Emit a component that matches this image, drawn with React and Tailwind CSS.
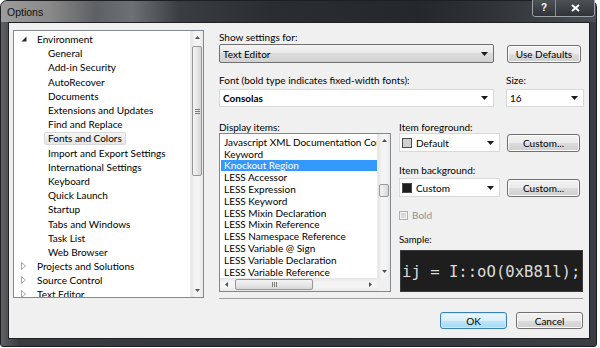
import React from "react";

const treeItems = [
  { t: "Environment", lvl: 0, exp: true },
  { t: "General", lvl: 1 },
  { t: "Add-in Security", lvl: 1 },
  { t: "AutoRecover", lvl: 1 },
  { t: "Documents", lvl: 1 },
  { t: "Extensions and Updates", lvl: 1 },
  { t: "Find and Replace", lvl: 1 },
  { t: "Fonts and Colors", lvl: 1, sel: true },
  { t: "Import and Export Settings", lvl: 1 },
  { t: "International Settings", lvl: 1 },
  { t: "Keyboard", lvl: 1 },
  { t: "Quick Launch", lvl: 1 },
  { t: "Startup", lvl: 1 },
  { t: "Tabs and Windows", lvl: 1 },
  { t: "Task List", lvl: 1 },
  { t: "Web Browser", lvl: 1 },
  { t: "Projects and Solutions", lvl: 0 },
  { t: "Source Control", lvl: 0 },
  { t: "Text Editor", lvl: 0 },
];

const listItems = [
  "Javascript XML Documentation Comment",
  "Keyword",
  "Knockout Region",
  "LESS Accessor",
  "LESS Expression",
  "LESS Keyword",
  "LESS Mixin Declaration",
  "LESS Mixin Reference",
  "LESS Namespace Reference",
  "LESS Variable @ Sign",
  "LESS Variable Declaration",
  "LESS Variable Reference",
  "LESS Variable Value",
];

function Arrow({ dir = "down", size = "sm", color = "#1a1a1a" }) {
  const big = size === "big";
  const w = big ? 7 : 5;
  const h = big ? 4 : 3;
  if (dir === "down")
    return (
      <svg width={w} height={h} viewBox={`0 0 ${w} ${h}`}>
        <path d={`M0 0H${w}L${w / 2} ${h}Z`} fill={color} />
      </svg>
    );
  if (dir === "up")
    return (
      <svg width={w} height={h} viewBox={`0 0 ${w} ${h}`}>
        <path d={`M0 ${h}H${w}L${w / 2} 0Z`} fill={color} />
      </svg>
    );
  if (dir === "left")
    return (
      <svg width={h} height={w} viewBox={`0 0 ${h} ${w}`}>
        <path d={`M${h} 0V${w}L0 ${w / 2}Z`} fill={color} />
      </svg>
    );
  return (
    <svg width={h} height={w} viewBox={`0 0 ${h} ${w}`}>
      <path d={`M0 0V${w}L${h} ${w / 2}Z`} fill={color} />
    </svg>
  );
}

function Button({ children, primary }) {
  return (
    <div
      className={
        primary
          ? "w-[67px] h-[17px] rounded-[3px] border border-[#3c7fb1] bg-[linear-gradient(#eaf6fd,#d9f0fc_50%,#bee6fd_50%,#a7d9f5)] shadow-[inset_0_0_0_1px_#c7ebfc] flex items-center justify-center text-[10px]"
          : "w-[67px] h-[17px] rounded-[3px] border border-[#707070] bg-[linear-gradient(#f2f2f2,#ebebeb_50%,#dddddd_50%,#cfcfcf)] shadow-[inset_0_0_0_1px_#fbfbfb] flex items-center justify-center text-[10px]"
      }
    >
      {children}
    </div>
  );
}

function SmallButton({ children, w }) {
  return (
    <div
      className={`${w} h-[18px] rounded-[3px] border border-[#707070] bg-[linear-gradient(#f2f2f2,#ebebeb_50%,#dddddd_50%,#cfcfcf)] shadow-[inset_0_0_0_1px_#fbfbfb] flex items-center justify-center text-[10px]`}
    >
      {children}
    </div>
  );
}

function VScroll({ thumbTop, thumbH, grip }) {
  return (
    <div className="w-[13px] h-full bg-[linear-gradient(90deg,#e4e4e4,#f4f4f4_30%,#f4f4f4_70%,#e8e8e8)] border-l border-[#ececec] flex flex-col items-center">
      <div className="h-[13px] flex items-center justify-center">
        <Arrow dir="up" color="#505050" />
      </div>
      <div className="flex-1 w-full relative">
        <div
          className="absolute left-[1px] right-[1px] rounded-[2px] border border-[#979797] bg-[linear-gradient(90deg,#f3f3f3,#e8e8e8_50%,#d6d6d6)] flex flex-col items-center justify-center gap-[1px]"
          style={{ top: thumbTop, height: thumbH }}
        >
          {grip && (
            <>
              <div className="w-[5px] h-px bg-[#7a7a7a]" />
              <div className="w-[5px] h-px bg-[#7a7a7a]" />
              <div className="w-[5px] h-px bg-[#7a7a7a]" />
            </>
          )}
        </div>
      </div>
      <div className="h-[13px] flex items-center justify-center">
        <Arrow dir="down" color="#505050" />
      </div>
    </div>
  );
}

function TreeToggle({ exp }) {
  if (exp)
    return (
      <svg width="6" height="6" viewBox="0 0 6 6">
        <path d="M5.5 0.5V5.5H0.5Z" fill="#262626" />
      </svg>
    );
  return (
    <svg width="5" height="8" viewBox="0 0 5 8">
      <path d="M0.5 0.5L4.5 4L0.5 7.5Z" fill="#fff" stroke="#a6a6a6" />
    </svg>
  );
}

export default function App() {
  return (
    <div className="w-[600px] h-[348px] bg-white overflow-hidden font-['Lato','Liberation_Sans',sans-serif] text-[10px] text-black leading-none">
      <div className="w-[597px] h-[347px] rounded-t-[7px] rounded-b-[3px] bg-[linear-gradient(90deg,#5e6064,#3a3c40_3%,#33363a_50%,#3a3d42)] flex flex-col pb-[7px] pl-[7px] pr-[6px] border border-[#1e1f22]">
        {/* title bar */}
        <div className="h-[21px] -ml-[7px] -mr-[6px] pl-[6px] rounded-t-[6px] bg-[linear-gradient(90deg,#9c9c9c_0%,#8a8a8a_8%,#5d6064_16%,#6d7075_22%,#3a3d42_30%,#2a2d31_45%,#24272b_70%,#2f3338_82%,#4a4f55_100%)] flex items-start justify-between">
          <span className="mt-[6px] text-[10.5px] text-[#111] font-['Liberation_Sans',sans-serif]">
            Options
          </span>
          <div className="flex mr-[1px] -mt-px h-[17px] rounded-b-[4px] border border-[#9ea3a8] border-t-0 overflow-hidden">
            <div className="w-[23px] h-full bg-[linear-gradient(#4d5257,#2f3338)] flex items-center justify-center border-r border-[#8d9297] text-white font-bold text-[10px] font-['Liberation_Sans',sans-serif]">
              ?
            </div>
            <div className="w-[38px] h-full bg-[linear-gradient(#4d5257,#2f3338)] flex items-center justify-center">
              <svg width="9" height="8" viewBox="0 0 9 8">
                <path d="M1 1L8 7M8 1L1 7" stroke="#fff" strokeWidth="2" />
              </svg>
            </div>
          </div>
        </div>

        {/* content */}
        <div className="flex-1 bg-[#f0f0f0] border border-[#1f2023] flex flex-col">
          <div className="flex pl-[4px] pt-[7px]">
            {/* tree */}
            <div className="w-[191px] h-[268px] bg-white border border-[#828790] flex">
              <div className="flex-1 overflow-hidden pt-[1px]">
                {treeItems.map((it) => (
                  <div
                    key={it.t}
                    className={`h-[14.2px] flex items-center whitespace-nowrap ${it.lvl === 0 ? "pl-[7px]" : "pl-[30px]"}`}
                  >
                    {it.lvl === 0 && (
                      <span className="w-[12px] flex items-center">
                        <TreeToggle exp={it.exp} />
                      </span>
                    )}
                    <span
                      className={`px-[3px] h-[13px] flex items-center rounded-[2px] border ${
                        it.sel
                          ? "border-[#d9d9d9] bg-[linear-gradient(#f4f4f4,#e6e6e6)]"
                          : "border-transparent"
                      }`}
                    >
                      {it.t}
                    </span>
                  </div>
                ))}
              </div>
              <VScroll thumbTop={2} thumbH={130} grip />
            </div>

            {/* right column */}
            <div className="ml-[15px] w-[365px] flex flex-col">
              <div className="mt-[1px] h-[12px] flex items-center">Show settings for:</div>
              <div className="mt-[1px] flex items-center">
                <div className="w-[275px] h-[19px] rounded-[2px] border border-[#707070] bg-[linear-gradient(#f3f3f3,#e9e9e9_50%,#dcdcdc_50%,#d2d2d2)] flex items-center justify-between pl-[3px] pr-[5px]">
                  <span>Text Editor</span>
                  <Arrow size="big" />
                </div>
                <div className="ml-[13px]">
                  <SmallButton w="w-[74px]">Use Defaults</SmallButton>
                </div>
              </div>

              <div className="mt-[11px] h-[12px] flex items-center">
                <div className="w-[287px]">Font (bold type indicates fixed-width fonts):</div>
                <div>Size:</div>
              </div>
              <div className="mt-[3px] flex items-center">
                <div className="w-[275px] h-[18px] bg-white border border-[#d9d9d9] flex items-center justify-between pl-[3px] pr-[5px]">
                  <span className="font-bold">Consolas</span>
                  <Arrow size="big" />
                </div>
                <div className="ml-[12px] w-[78px] h-[18px] bg-white border border-[#d9d9d9] flex items-center justify-between pl-[3px] pr-[5px]">
                  <span>16</span>
                  <Arrow size="big" />
                </div>
              </div>

              <div className="mt-[14px] flex">
                {/* display items */}
                <div className="w-[172px] flex flex-col">
                  <div className="h-[12px] flex items-center">Display items:</div>
                  <div className="h-[159px] bg-white border border-[#828790] flex flex-col">
                    <div className="flex-1 flex min-h-0">
                      <div className="flex-1 overflow-hidden pt-[2px] pl-px">
                        {listItems.map((t) => (
                          <div
                            key={t}
                            className={`h-[11.8px] flex items-center pl-[3px] whitespace-nowrap ${
                              t === "Knockout Region" ? "bg-[#3399ff] text-white" : ""
                            }`}
                          >
                            {t}
                          </div>
                        ))}
                      </div>
                      <VScroll thumbTop={37} thumbH={13} />
                    </div>
                    <div className="h-[13px] flex">
                      <div className="flex-1 bg-[linear-gradient(#e4e4e4,#f4f4f4_30%,#f4f4f4_70%,#e8e8e8)] flex items-center">
                        <div className="w-[13px] flex items-center justify-center">
                          <Arrow dir="left" color="#505050" />
                        </div>
                        <div className="flex-1 h-full relative">
                          <div className="absolute top-[1px] bottom-[1px] left-[2px] w-[78px] rounded-[2px] border border-[#979797] bg-[linear-gradient(#f3f3f3,#e8e8e8_50%,#d6d6d6)] flex items-center justify-center gap-[1px]">
                            <div className="w-px h-[5px] bg-[#7a7a7a]" />
                            <div className="w-px h-[5px] bg-[#7a7a7a]" />
                            <div className="w-px h-[5px] bg-[#7a7a7a]" />
                          </div>
                        </div>
                        <div className="w-[13px] flex items-center justify-center">
                          <Arrow dir="right" color="#505050" />
                        </div>
                      </div>
                      <div className="w-[13px] bg-[#f0f0f0]" />
                    </div>
                  </div>
                </div>

                {/* right subcolumn */}
                <div className="ml-[8px] flex-1 flex flex-col">
                  <div className="h-[12px] flex items-center">Item foreground:</div>
                  <div className="flex items-center">
                    <div className="w-[101px] h-[19px] bg-white border border-[#d9d9d9] flex items-center pl-[2px] pr-[5px]">
                      <div className="w-[10px] h-[10px] border border-[#4a4a4a] bg-[#d0d0d0]" />
                      <span className="ml-[4px] flex-1">Default</span>
                      <Arrow size="big" />
                    </div>
                    <div className="ml-[7px]">
                      <SmallButton w="w-[73px]">Custom...</SmallButton>
                    </div>
                  </div>
                  <div className="mt-[12px] h-[12px] flex items-center">Item background:</div>
                  <div className="mt-[2px] flex items-center">
                    <div className="w-[101px] h-[19px] bg-white border border-[#d9d9d9] flex items-center pl-[2px] pr-[5px]">
                      <div className="w-[10px] h-[10px] border border-[#4a4a4a] bg-[#1e1e1e]" />
                      <span className="ml-[4px] flex-1">Custom</span>
                      <Arrow size="big" />
                    </div>
                    <div className="ml-[7px]">
                      <SmallButton w="w-[73px]">Custom...</SmallButton>
                    </div>
                  </div>
                  <div className="mt-[12px] h-[12px] flex items-center">
                    <div className="w-[9px] h-[9px] border border-[#b1b1b1] bg-[#f4f4f4] flex items-center justify-center">
                      <div className="w-[5px] h-[5px] bg-[linear-gradient(135deg,#d2d2d2,#e4e4e4)]" />
                    </div>
                    <span className="ml-[4px] text-[#8d8d8d]">Bold</span>
                  </div>
                  <div className="mt-[13px] h-[12px] flex items-center text-[9.5px]">Sample:</div>
                  <div className="mt-[4px] ml-px w-[183px] h-[42px] bg-[#1e1e1e] border border-[#3a3a3a] flex items-center pl-[1px] pt-[3px] overflow-hidden">
                    <span className="font-['DejaVu_Sans_Mono',monospace] text-[15.6px] text-[#dcdcdc] whitespace-nowrap">
                      ij = I::oO(0xB81l);
                    </span>
                  </div>
                </div>
              </div>

              <div className="mt-[6px] h-px w-[364px] bg-[#a0a0a0]" />
            </div>
          </div>

          <div className="mt-[13px] flex justify-end pr-[6px] gap-[9px]">
            <Button primary>OK</Button>
            <Button>Cancel</Button>
          </div>
        </div>
      </div>
    </div>
  );
}
